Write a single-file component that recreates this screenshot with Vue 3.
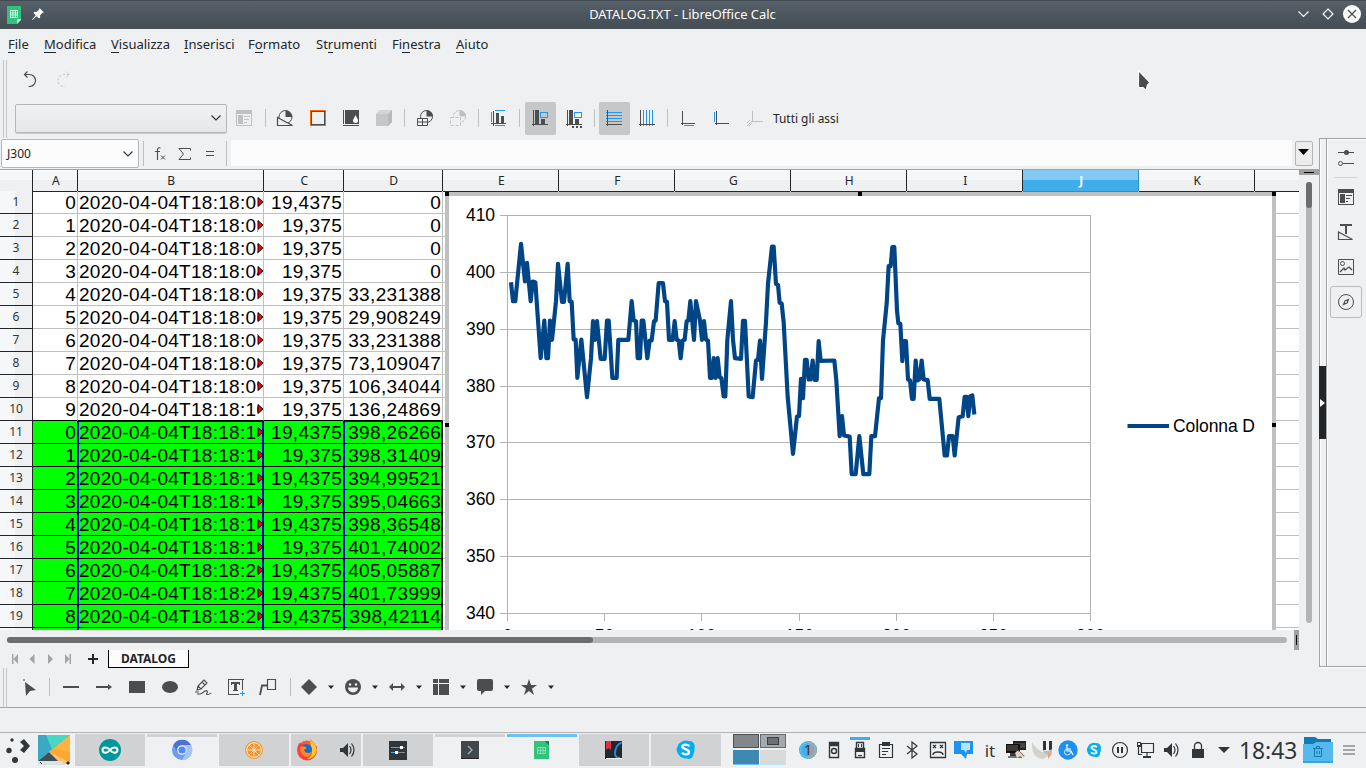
<script setup>
const menus = [
  ['', 'F', 'ile'], ['', 'M', 'odifica'], ['', 'V', 'isualizza'], ['', 'I', 'nserisci'],
  ['F', 'o', 'rmato'], ['St', 'r', 'umenti'], ['Fi', 'n', 'estra'], ['', 'A', 'iuto'],
]
const cols = ['A', 'B', 'C', 'D', 'E', 'F', 'G', 'H', 'I', 'J', 'K', '']
const secs = ['01', '02', '03', '04', '05', '06', '07', '08', '09', '10', '14', '15', '16', '17', '18', '19', '20', '21', '22', '23']
const temps = ['19,4375', '19,375', '19,375', '19,375', '19,375', '19,375', '19,375', '19,375', '19,375', '19,375',
  '19,4375', '19,375', '19,4375', '19,375', '19,4375', '19,375', '19,4375', '19,4375', '19,4375', '19,4375']
const vals = ['0', '0', '0', '0', '33,231388', '29,908249', '33,231388', '73,109047', '106,34044', '136,24869',
  '398,26266', '398,31409', '394,99521', '395,04663', '398,36548', '401,74002', '405,05887', '401,73999', '398,42114', '398,47']
const rows = vals.map((v, i) => ({
  n: i + 1, a: i < 10 ? i : i - 10, b: '2020-04-04T18:18:' + secs[i], c: temps[i], d: v, green: i > 9, first: i === 10, before: i === 9,
}))
const yTicks = [410, 400, 390, 380, 370, 360, 350, 340].map((v, i) => ({ v, y: 215.5 + Math.round(i * 56.86) }))
const xTicks = [0, 50, 100, 150, 200, 250, 300].map((v, i) => ({ v, x: Math.round(507 + i * 97.2) + 0.5 }))
const series = '213,305 219,362 226,362 234,280 243,190 255,303 261,247 272,362 278,303 286,305 302,533 313,420 319,533 324,533 330,420 336,478 348,362 354,250 366,364 372,364 383,250 389,362 395,364 401,477 407,477 412,592 424,477 441,650 453,533 459,422 465,478 471,422 482,535 494,535 501,420 506,420 517,592 530,592 535,478 565,478 575,362 581,420 588,422 593,533 600,533 605,420 610,420 622,533 629,480 635,480 642,422 647,420 656,308 669,308 675,362 681,364 687,478 698,478 704,422 710,478 716,480 722,533 728,480 734,478 740,422 745,420 751,362 762,478 768,362 780,420 786,478 792,422 798,478 804,480 810,592 816,592 821,533 827,592 833,533 839,590 844,592 851,648 856,648 862,478 873,362 879,478 885,533 903,535 909,421 915,421 926,648 938,650 948,540 954,538 960,480 966,595 978,425 984,310 996,198 1001,198 1008,310 1014,313 1019,367 1025,369 1031,425 1043,648 1059,820 1071,708 1077,707 1083,595 1089,653 1095,538 1100,538 1106,597 1112,597 1118,540 1124,598 1130,598 1136,482 1142,541 1183,540 1189,600 1199,767 1206,707 1212,765 1229,768 1235,881 1247,881 1258,767 1270,881 1288,881 1294,767 1305,767 1317,653 1323,653 1329,480 1340,370 1346,257 1352,257 1357,200 1363,200 1371,390 1375,428 1381,430 1387,542 1392,482 1398,482 1404,597 1410,599 1416,655 1421,655 1427,540 1433,600 1439,595 1445,540 1451,597 1463,599 1469,655 1498,655 1514,825 1521,825 1527,767 1538,767 1544,825 1556,710 1568,707 1574,649 1580,649 1585,707 1591,647 1597,645 1603,702'

const D = '#4d4d4d'
const B = '#1d99f3'
const G = '#bfc0c1'
const cr = 'shape-rendering="crispEdges"'
const chartBar = [
  { k: 'icon', g: `<g ${cr} fill="${G}"><path d="M0 0h16v16H0z"/><path d="M1 4h14v11H1z" fill="#eff0f1"/><path d="M2 5h5v9H2zM8 6h6v1H8zM8 9h5v1H8zM8 12h3v1H8z"/></g>` },
  { k: 'sep' },
  { k: 'icon', g: `<circle cx="8.500" cy="7" r="6.500" fill="none" stroke="${D}"/><path d="M8.500 .5A6.500 6.500 0 0 1 15 7H8.500z" fill="${D}"/><path d="M.5 7.500v8h15z" fill="#eff0f1" stroke="${D}" stroke-width="1.200"/>` },
  { k: 'icon', g: `<g ${cr}><path d="M0 0h16v16H0z" fill="#ff6600"/><path d="M1 1h14v14H1z" fill="${D}"/><path d="M2 2h12v12H2z" fill="#eff0f1"/></g>` },
  { k: 'icon', g: `<path ${cr} d="M0 0h1v14H0zM2 0h14v14H2zM0 15h16v1H0z" fill="${D}"/><path d="M12.500 5c1.500 3 2.500 4 2.500 5.500a2.500 2.500 0 0 1-5 0C10 9 11.500 8 12.500 5z" fill="#fff"/>` },
  { k: 'icon', g: `<path d="M0 4l4-4h12v12l-4 4H0z" fill="#c5c6c7"/><path d="M12 4l4-4v12l-4 4z" fill="#b8b9ba"/><path d="M0 4l4-4h12l-4 4z" fill="#d3d4d5"/>` },
  { k: 'sep' },
  { k: 'icon', g: `<circle cx="9.500" cy="6.500" r="6" fill="none" stroke="${D}"/><path d="M9.500 0A6.500 6.500 0 0 1 16 6.500H9.500z" fill="${D}"/><path d="M.5 8.500h10v7H.5zM5.500 8.500v7M.5 12h10" fill="#eff0f1" stroke="${D}"/>` },
  { k: 'icon', g: `<circle cx="9.500" cy="6.500" r="6" fill="none" stroke="${G}" stroke-dasharray="3 1"/><path d="M9.500 0A6.500 6.500 0 0 1 16 6.500H9.500z" fill="${G}"/><path d="M.5 7.500h10v8H.5z" fill="#eff0f1" stroke="${G}" stroke-dasharray="3 2"/>` },
  { k: 'sep' },
  { k: 'icon', g: `<path ${cr} d="M2 1h1v15H2zM0 13h15v1H0zM5 3h3v10H5zM10 6h3v7h-3z" fill="${D}"/><path ${cr} d="M0 2h1v10H0zM4 0h10v1H4zM4 15h10v1H4z" fill="${B}"/>` },
  { k: 'sep' },
  { k: 'icon', on: 1, g: `<path ${cr} d="M1 0h1v16H1zM0 14h16v1H0zM3 0h4v14H3zM9 9h4v5H9z" fill="${D}"/><path ${cr} d="M8 2h8v6H8zM9 3v4h6V3z" fill="${B}" fill-rule="evenodd"/>` },
  { k: 'icon', g: `<path ${cr} d="M1 0h1v16H1zM0 14h16v1H0zM3 0h4v14H3zM9 9h4v5H9zM6 16h2v2H6zM10 16h2v2h-2zM14 16h2v2h-2z" fill="${D}"/><path ${cr} d="M8 2h8v6H8zM9 3v4h6V3z" fill="${B}" fill-rule="evenodd"/><path d="M9 3h6v4H9z" fill="#fcfcfc"/>` },
  { k: 'sep' },
  { k: 'icon', on: 1, g: `<path ${cr} d="M0 2h16v1H0zM0 5h16v1H0zM0 8h16v1H0zM0 11h16v1H0z" fill="${B}"/><path ${cr} d="M1 0h1v16H1zM0 14h16v1H0z" fill="${D}"/>` },
  { k: 'icon', g: `<path ${cr} d="M4 0h1v16H4zM7 0h1v16H7zM10 0h1v16h-1zM13 0h1v16h-1z" fill="${B}"/><path ${cr} d="M1 0h1v16H1zM0 14h16v1H0z" fill="${D}"/>` },
  { k: 'sep' },
  { k: 'icon', g: `<path ${cr} d="M2 1h1v14H2zM1 13h14v1H1z" fill="${D}"/><path ${cr} d="M4 15h10v1H4z" fill="${B}"/>` },
  { k: 'icon', g: `<path ${cr} d="M3 1h1v14H3zM2 13h14v1H2z" fill="${D}"/><path ${cr} d="M1 2h1v10H1z" fill="${B}"/>` },
  { k: 'icon', g: `<path ${cr} d="M5 1h1v11H5zM5 11h11v1H5z" fill="${G}"/><path d="M5 11l-5 5M3 10l-3 3M5 13l-3 3" stroke="${G}"/>` },
]
const caret = `<path d="M5 6.500h6L8 10z" fill="#232629"/>`
const drawBar = [
  { g: `<path d="M4 3l11 8-6 1-4 5z" fill="${D}"/><path d="M2 0h2v2H2z" fill="#999"/>` },
  { k: 'sep' },
  { g: `<path ${cr} d="M0 7h16v2H0z" fill="${D}"/>` },
  { g: `<path ${cr} d="M0 7h13v2H0z" fill="${D}"/><path d="M12 5l4 3-4 3z" fill="${D}"/>` },
  { g: `<path d="M0 2h16v12H0z" fill="${D}"/>` },
  { g: `<ellipse cx="8" cy="8" rx="8" ry="6" fill="${D}"/>` },
  { g: `<path d="M3 7l6-6 3 3-6 6-4 1zM7 3l3 3M3 7l3 3M4 13H0M2 15h3c3 0 5-5 7-3s-2 3 0 3.500 4-2 4-1" fill="none" stroke="${D}" stroke-width="1.100"/>` },
  { g: `<path d="M.5 0v13M14.500 0v11M0 .5h16M0 15.500h11M.5 12v4" stroke="${D}" fill="none"/><path ${cr} d="M3 3h9v3h-1V5H9v6h1v1H5v-1h1V5H4v1H3z" fill="${D}"/><path ${cr} d="M12 14h5v1h-5zM14 12h1v5h-1z" fill="${B}"/>` },
  { g: `<path d="M7.500 .5h8v10h-8z" fill="none" stroke="${D}" stroke-width="1.200"/><path d="M0 16l2-9.500h5" fill="none" stroke="${D}" stroke-width="1.800"/>` },
  { k: 'sep' },
  { g: `<path d="M8 0l8 8-8 8-8-8z" fill="${D}"/>` }, { g: caret },
  { g: `<circle cx="8" cy="8" r="8" fill="${D}"/><circle cx="5" cy="5.500" r="1.200" fill="#eff0f1"/><circle cx="11" cy="5.500" r="1.200" fill="#eff0f1"/><path d="M3 8.500h10a5 5 0 0 1-10 0z" fill="#eff0f1"/>` }, { g: caret },
  { g: `<path d="M0 8l4-4v3h8V4l4 4-4 4V9H4v3z" fill="${D}"/>` }, { g: caret },
  { g: `<path ${cr} d="M0 0h5v4H0zM6 0h10v4H6zM0 5h5v11H0zM6 5h4v5H6zM11 5h5v5h-5zM6 11h10v5H6z" fill="${D}"/><path ${cr} d="M6 5h10v11H6z" fill="${D}"/>` }, { g: caret },
  { g: `<path d="M2 0h12q2 0 2 2v8q0 2-2 2h-6l-4 4v-4H2q-2 0-2-2V2q0-2 2-2z" fill="${D}"/>` }, { g: caret },
  { g: `<path d="M8 0l2 6h6l-5 3.800L13 16l-5-4-5 4 2-6.200L0 6h6z" fill="${D}"/>` }, { g: caret },
]
const side = [
  `<path ${cr} d="M0 2h16v1H0zM5 13h11v1H5z" fill="${D}"/><circle cx="8.500" cy="2.500" r="2.500" fill="${D}"/><circle cx="2.500" cy="13.500" r="2" fill="none" stroke="${D}"/>`,
  `<path ${cr} d="M0 0h16v16H0zM1 4v11h14V4z" fill="${D}" fill-rule="evenodd"/><path ${cr} d="M2 5h5v9H2zM8 6h6v1H8zM8 9h4v1H8zM8 12h2v1H8z" fill="${D}"/>`,
  `<path ${cr} d="M2 0h12v2H2zM7 2h2v8H7z" fill="${D}"/><path d="M.5 8v7.500h14z" fill="none" stroke="${D}" stroke-width="1.200"/>`,
  `<path d="M.5 .5h15v15H.5z" fill="none" stroke="${D}"/><circle cx="4.500" cy="4.500" r="2" fill="none" stroke="${D}"/><path d="M2 13l4-4 1 2 4-3 1 1 2 2" fill="none" stroke="${D}" stroke-width="1.300"/>`,
  `<circle cx="8" cy="8" r="7.500" fill="none" stroke="${D}"/><path d="M11.500 4.500l-2 5-5 2 2-5z" fill="${D}"/><circle cx="8" cy="8" r="1" fill="#eff0f1"/>`,
]
const spk = `<path d="M1 7h3l5-5v14l-5-5H1z" fill="#31363b"/><path d="M10.500 5q3 4 0 8M12.500 2.500q5 6.500 0 13" fill="none" stroke="#31363b" stroke-width="1.200"/>`
const skype = `<path d="M2 7A9 9 0 0 1 13 1.500a5.500 5.500 0 0 1 6 7A9 9 0 0 1 18 14a5 5 0 0 1-7 5A9 9 0 0 1 1.500 12 5 5 0 0 1 2 7z" fill="#00aff0"/><path d="M14 6.500q-4-2.500-6.500-.5c-3 3.500 6 3.500 6 6.500 0 3-5 3-7 .8" fill="none" stroke="#fff" stroke-width="2.400"/>`
const tasks = [
  { bg: 1, g: `<circle cx="11" cy="11" r="11" fill="#00979c"/><path d="M11 11C8.500 7.500 3.500 7.500 3.500 11s5 3.500 7.500 0 7.500-3.500 7.500 0-5 3.500-7.500 0z" fill="none" stroke="#fff" stroke-width="2"/>` },
  { top: 'gray', g: `<circle cx="11" cy="11" r="10" fill="#6f9bf0"/><path d="M2.300 6A10 10 0 0 1 20 6H11a5 5 0 0 0-4.500 7z" fill="#4a72d8"/><path d="M20 6a10 10 0 0 1-9 15l4.500-8A5 5 0 0 0 11 6z" fill="#a5c3f8"/><circle cx="11" cy="11" r="4.800" fill="#eaf1ff"/><circle cx="11" cy="11" r="3.600" fill="#4c8bf5"/>` },
  { bg: 1, g: `<circle cx="11" cy="11" r="9" fill="#f59a2a"/><circle cx="11" cy="11" r="7.800" fill="#ffe3b5"/><circle cx="11" cy="11" r="6.800" fill="#f98f2e"/><path d="M11 4v14M4 11h14M6 6l10 10M16 6L6 16" stroke="#ffe3b5"/>` },
  { bg: 1, ff: 1, g: `<circle cx="11" cy="11.500" r="10" fill="#ff5a28"/><path d="M3 4Q0 10 3 16q5 7 12 4 7-4 6-12Q18 4 14 0q2 5-2 7z" fill="#ff3b4b"/><path d="M14 1q9 6 6 13-3 6-9 6 6-3 5-9-2-4-2-10z" fill="#ffca28"/><circle cx="10.500" cy="10.500" r="5.500" fill="#176ad2"/><path d="M4 8q4-2 7 1l-3 2q1 3 5 3 3-1 3-2-1 6-6 6-6-2-6-10z" fill="#ff8a16"/>` },
  { bg: 1, g: `<path d="M2 2h18v19H2z" fill="#31363b"/><path d="M4 8.500h10M4 13.500h5" stroke="#3daee9"/><path d="M14 8.500h4M9 13.500h9" stroke="#858a8e"/><path d="M13 7h3v3h-3zM8 12h3v3H8z" fill="#fff"/>` },
  { top: 'gray', g: `<path d="M2 2h18v18H2z" fill="#40484b"/><path d="M2 19h18v1H2z" fill="#222"/><path d="M9 7l4 4-4 4" fill="none" stroke="#aab2b5" stroke-width="1.300"/>` },
  { top: 'blue', g: `<path d="M3 2h10l5 5v13H3z" fill="#31c27c"/><path d="M13 2h5v5z" fill="#168554"/><path d="M6.500 8.500h8v6h-8zM9.500 8.500v6M12 8.500v6M6.500 11.500h8" fill="none" stroke="#83e0b2"/>` },
  { bg: 1, g: `<path d="M2 2h17v18H2z" fill="#24282b"/><path d="M3 2h5v9l-2.500-2L3 11z" fill="#da3347"/><path d="M19 3.500q-7 2-7 12 1 4 5 3" fill="none" stroke="#1d91f0" stroke-width="1.800"/><path d="M3 19h16v1H3z" fill="#eee"/>` },
  { bg: 1, g: `<g transform="translate(.5 .5)">${skype}</g>` },
]
const T = '#31363b'
const tray = [
  `<circle cx="10" cy="10" r="9" fill="#40b1ec"/><path d="M10 1a9 9 0 0 1 0 18z" fill="#9ba2a6"/><circle cx="10" cy="10" r="7.500" fill="none" stroke="#75c3e9"/><text x="10" y="15" text-anchor="middle" font-size="14" fill="#31363b">1</text>`,
  `<path d="M5.500 2.500h9v15h-9zM5 5.500h10" fill="none" stroke="${T}" stroke-width="1.400"/><circle cx="10" cy="11" r="2.500" fill="none" stroke="${T}" stroke-width="1.500"/><path d="M6 3h8v2H6z" fill="${T}"/>`,
  `<path d="M6.500 2.500h7v6h-7zM5.500 8.500h9v9h-9z" fill="none" stroke="${T}" stroke-width="1.400"/><path d="M8 4h1v3H8zM11 4h1v3h-1zM6 9h8v3H6zM8 15h4v1H8z" fill="${T}"/>`,
  `<path d="M3.500 4.500h13v13h-13z" fill="none" stroke="${T}" stroke-width="1.200"/><path d="M6 2h8v4H6zM6 8h8v1H6zM6 11h6v1H6zM6 14h4v1H6z" fill="${T}"/>`,
  `<path d="M5 6l10 8-5 4V2l5 4-10 8" fill="none" stroke="${T}" stroke-width="1.200"/>`,
  `<path d="M2.500 2.500h15v15h-15z" fill="none" stroke="${T}" stroke-width="1.300"/><path d="M5 5l3 3M8 5L5 8M12 5l3 3M15 5l-3 3M5 15q0-3 5-3t5 3" fill="none" stroke="${T}" stroke-width="1.400"/>`,
  `<path d="M0 1h19v13h-6l-1 5-5-5H0z" fill="#1d94f3"/><path d="M7 3h9v7h-3l-1 3-2-3H7z" fill="#b9e3ff"/>`,
  '',
  `<path d="M7 1h13v9H7z" fill="#222"/><path d="M8 3h11v5H8z" fill="#444"/><path d="M0 4h14v9H0z" fill="#111"/><path d="M1 5h11v6H1zM4 13h9v3H4z" fill="#3a3a3a"/><path d="M2 16h14v2H2z" fill="#777"/><path d="M9 13l2-2 5 1 4 4-3 2-3-2-3 2z" fill="#ddd6c8"/><path d="M12 10l6 6" stroke="#8c745c"/>`,
  `<path d="M0 2q4 7 10 10l5-1 3 4-7 4Q-1 18 0 2z" fill="#d4d0cb"/><path d="M11 1h3v9h-3z" fill="#333"/><path d="M17 1h3v9h-3z" fill="#333"/><path d="M10 9q5 4 10 0v4q-6 4-10-4z" fill="#bdb9b5"/><path d="M16 13l4 1-4 5z" fill="#f3a16b"/>`,
  `<circle cx="10" cy="10" r="9.700" fill="#1d90f5"/><circle cx="9" cy="5.500" r="1.200" fill="#fff"/><path d="M9 7v4h4l2 4M9 9h4" fill="none" stroke="#fff" stroke-width="1.200"/><circle cx="9.500" cy="12" r="3" fill="none" stroke="#d5ebff"/>`,
  `<g transform="translate(2 2) scale(.78)">${skype}</g>`,
  `<circle cx="10" cy="10" r="7.500" fill="none" stroke="${T}" stroke-width="1.200"/><path d="M7 7h2v6H7zM11 7h2v6h-2z" fill="${T}"/>`,
  `<path d="M5.500 3.500h12v9h-12zM2.500 5.500v9H6M11 13v4M7 17h8" fill="none" stroke="${T}" stroke-width="1.200"/><path d="M1 2h4v5H1zM7 16h8v2H7z" fill="${T}"/><path d="M2 3h2v2H2z" fill="#eee"/>`,
  `<g transform="translate(1 1)">${spk}</g>`,
  `<path d="M4 9h12v9H4z" fill="${T}"/><path d="M6.500 9V6a3.500 3.500 0 0 1 7 0v3" fill="none" stroke="${T}" stroke-width="1.300"/>`,
  `<path d="M4 7h12l-6 6z" fill="${T}"/>`,
]
</script>

<template>
  <div class="screen">
    <header class="title">
      <svg class="app-ico" width="14" height="18" viewBox="0 0 14 18"><path d="M0 0h14v13l-4 5H0z" fill="#2ec27e" /><path d="M14 13v1l-4 4v-5z" fill="#b5efd1" /><path d="M3.500 4.500h7v7h-7zM3.500 7h7M3.500 9h7M6 5v7M8.500 5v7" fill="none" stroke="#c8f5dd" /></svg>
      <svg class="pin" width="12" height="12" viewBox="0 0 12 12"><path d="M7.500 0L12 4.500l-1.500 .3-2.500 2.700 .2 2L7 10.500 4.800 8.200 .5 12 0 11.500 3.800 7.200 1.500 5l1-1.200 2 .2L7.200 1.500z" fill="#fcfcfc" /></svg>
      <span class="name">DATALOG.TXT - LibreOffice Calc</span>
      <svg class="wm" width="64" height="20" viewBox="0 0 64 20"><path d="M1.500 7.500l5 5 5-5" fill="none" stroke="#fcfcfc" stroke-width="1.200" /><path d="M31 5l5 5-5 5-5-5z" fill="none" stroke="#fcfcfc" stroke-width="1.200" /><circle cx="55" cy="10" r="9" fill="#fcfcfc" /><path d="M51 6l8 8M59 6l-8 8" stroke="#475057" stroke-width="1.300" /></svg>
    </header>
    <nav class="menu"><span v-for="m in menus" :key="m.join('')">{{ m[0] }}<u>{{ m[1] }}</u>{{ m[2] }}</span></nav>

    <section class="bars">
      <i class="grip" />
      <div class="bar-rows">
        <div class="undo-row">
          <svg width="16" height="16" viewBox="0 0 16 16"><path d="M4.500 .5l-3 3 3 3M1.500 3.500h5a5.500 5.500 0 0 1 0 12h-1" fill="none" stroke="#4d4d4d" stroke-width="1.200" /></svg>
          <svg width="16" height="16" viewBox="0 0 16 16"><path d="M10 .5l3 3-3 3" fill="none" stroke="#cfd0d1" /><path d="M13 3.500H8a5.500 5.500 0 0 0 0 12h1" fill="none" stroke="#bfc0c1" stroke-dasharray="2 2" /></svg>
        </div>
        <div class="chart-row">
          <div class="combo"><svg width="10" height="6" viewBox="0 0 10 6"><path d="M.5 .5L5 5 9.500 .5" fill="none" stroke="#31363b" stroke-width="1.200" /></svg></div>
          <div v-for="(t, i) in chartBar" :key="i" :class="[t.k, { on: t.on }]"><svg v-if="t.g" width="16" height="16" viewBox="0 0 16 16" v-html="t.g" /></div>
          <span class="axes">Tutti gli assi</span>
        </div>
      </div>
    </section>

    <main class="body">
      <div class="left">
        <div class="formula">
          <div class="cellname"><span>J300</span><svg width="10" height="6" viewBox="0 0 10 6"><path d="M.5 .5L5 5 9.500 .5" fill="none" stroke="#31363b" stroke-width="1.200" /></svg></div>
          <div class="sep" />
          <div><svg width="12" height="14" viewBox="0 0 12 14"><path d="M6.500 1Q3.500 0 3.500 3v10M1 4.500h5" fill="none" stroke="#4d4d4d" stroke-width="1.100" /><path d="M7 8.500l4 4M11 8.500l-4 4" stroke="#4d4d4d" /></svg></div>
          <div><svg width="14" height="12" viewBox="0 0 14 12"><path d="M12.500 2.500v-2H1l4.500 5.500L1 11.500h11.500v-2" fill="none" stroke="#4d4d4d" /></svg></div>
          <div><svg width="8" height="5" viewBox="0 0 8 5"><path d="M0 .5h8M0 4.500h8" stroke="#4d4d4d" /></svg></div>
          <div class="sep" />
          <div class="input" />
          <div class="expand"><svg width="11" height="6" viewBox="0 0 11 6"><path d="M0 0h11L5.500 6z" fill="#000" /></svg></div>
        </div>
        <div class="sheet">
          <div class="cells">
            <div class="row head"><div class="corner" /><div v-for="c in cols" :key="c" :class="{ sel: c === 'J' }">{{ c }}</div></div>
            <div v-for="r in rows" :key="r.n" class="row data" :class="{ green: r.green, first: r.first, before: r.before }">
              <div class="rn">{{ r.n }}</div>
              <div class="cell">{{ r.a }}</div>
              <div class="cell date"><span>{{ r.b }}</span><svg width="5" height="10" viewBox="0 0 5 10"><path d="M0 .5v9L5 5z" fill="#f00" stroke="#000" stroke-width=".9" /></svg></div>
              <div class="cell">{{ r.c }}</div>
              <div class="cell dval">{{ r.d }}</div>
              <div v-for="k in 8" :key="k" class="cell" />
            </div>
            <svg class="chart" width="831" height="438" viewBox="445 192 831 438">
              <rect x="447" y="194" width="827" height="450" fill="#fff" stroke="#c0c0c0" stroke-width="4" />
              <g stroke="#b3b3b3">
                <path v-for="t in yTicks" :key="t.v" :d="`M500 ${t.y}H1091`" />
                <path d="M507.500 215V619M1090.500 215V619" />
                <path v-for="t in xTicks" :key="t.v" :d="`M${t.x} 613V621`" />
              </g>
              <text v-for="t in yTicks" :key="t.v" x="495" :y="t.y + 5.500" text-anchor="end" textLength="29">{{ t.v }}</text>
              <text v-for="t in xTicks" :key="'x' + t.v" :x="t.x" y="641.500" text-anchor="middle">{{ t.v }}</text>
              <g transform="translate(440 180.5) scale(.33333)"><polyline :points="series" fill="none" stroke="#004586" stroke-width="12.500" stroke-linejoin="round" /></g>
              <path d="M1127.500 426H1169" stroke="#004586" stroke-width="4" />
              <text x="1173" y="432" textLength="82">Colonna D</text>
              <path d="M445 192h4v4h-4zM858 192h4v4h-4zM1272 192h4v4h-4zM445 423h4v4h-4zM1272 423h4v4h-4z" fill="#000" />
            </svg>
          </div>
          <div class="vscroll"><i class="split" /><div class="track"><b /></div></div>
        </div>
        <div class="hscroll"><div class="track"><b /></div><i class="split" /></div>
        <div class="tabs">
          <svg width="64" height="12" viewBox="0 0 64 12"><g fill="#a3a4a5"><path d="M2 1h1.500v10H2zM8 1v10L3.500 6zM24.500 1v10l-5-5zM38 1v10l5-5zM55 1v10l4.500-5zM59.500 1H61v10h-1.500z" /></g></svg>
          <svg class="plus" width="10" height="10" viewBox="0 0 10 10"><path d="M0 5h10M5 0v10" stroke="#232629" stroke-width="2" /></svg>
          <div class="tab">DATALOG</div>
        </div>
      </div>
      <aside class="side">
        <div class="splitter"><div class="handle"><svg width="6" height="8" viewBox="0 0 6 8"><path d="M0 0l5 4-5 4z" fill="#fff" /></svg></div></div>
        <div class="deck"><div v-for="(s, i) in side" :key="i" class="sb"><svg width="16" height="16" viewBox="0 0 16 16" v-html="s" /></div></div>
      </aside>
    </main>

    <section class="draw">
      <i class="grip" />
      <div v-for="(t, i) in drawBar" :key="i" :class="t.k || 'icon'"><svg v-if="t.g" width="16" height="16" viewBox="0 0 16 16" v-html="t.g" /></div>
    </section>
    <div class="status" />

    <footer class="panel">
      <svg class="kick" width="24" height="26" viewBox="0 0 24 26"><g fill="#31363b"><circle cx="6" cy="3" r="1.700" /><circle cx="3" cy="13.500" r="2.700" /><circle cx="9" cy="23" r="3" /><path d="M14 5l4-3 6 7-6 7-4-3 4-4z" /></g></svg>
      <svg class="pic" width="32" height="30" viewBox="0 0 32 30"><path d="M0 0h32L11 17 0 26z" fill="#3ba8c5" /><path d="M8 0h24L14 14z" fill="#45d9c4" /><path d="M32 0v28L11 17z" fill="#ffa62e" /><path d="M32 0v17L16 14z" fill="#ffb340" /><path d="M0 26l11-9 13 9z" fill="#3e5055" /><path d="M11 17l21 11-8 2-4-4z" fill="#f9c476" /><path d="M0 26h24l2 4H0z" fill="#dfe1e4" /><path d="M2 27l2 2M29 27h2v2h-2z" stroke="#333" /></svg>
      <div class="tasks">
        <div v-for="(t, i) in tasks" :key="i" class="task" :class="[{ bg: t.bg }, t.top]">
          <svg width="22" height="22" viewBox="0 0 22 22" v-html="t.g" />
          <svg v-if="t.ff" class="spk" width="18" height="18" viewBox="0 0 18 18" v-html="spk" />
        </div>
      </div>
      <div class="pager"><i class="p1" /><i class="p2"><b /></i><i class="p3" /><i class="p4" /></div>
      <div class="tray">
        <div v-for="(t, i) in tray" :key="i" :class="{ act: i === 2 }"><span v-if="!t">it</span><svg v-else width="20" height="20" viewBox="0 0 20 20" v-html="t" /></div>
      </div>
      <div class="clock">18:43</div>
      <svg class="trash" width="30" height="27" viewBox="0 0 30 27"><path d="M1 1h11l3 2h13v8H1z" fill="#147ab5" /><path d="M0 8h10l3-2h17v21H0z" fill="#54b9ee" /><path d="M0 25h30v2H0z" fill="#3aa2df" /><path d="M11.500 12.500h7v8h-7zM10 12.500h10M13.500 12v-1.500h3V12M14 15v3M16.500 15v3" fill="none" stroke="#1d78ad" /></svg>
      <svg width="12" height="10" viewBox="0 0 12 10"><path d="M0 1h12M0 5h12M0 9h12" stroke="#8b8e91" stroke-width="1.500" /></svg>
    </footer>
    <svg class="pointer" width="16" height="24" viewBox="0 0 16 24"><path d="M1.500 1.500v17h4.500l3 3 1.500-5.500 2.500-2.500z" fill="#4b4b4b" stroke="#fff" stroke-width="1.200" /></svg>
  </div>
</template>

<style>
body { margin: 0; overflow: hidden; }
</style>
<style scoped>
* { box-sizing: border-box; }
svg { display: block; flex: none; overflow: visible; }
.screen { position: relative; width: 1366px; height: 768px; display: flex; flex-direction: column; background: #eff0f1; font: 13px "Noto Sans", sans-serif; color: #232629; overflow: hidden; }
.title { height: 29px; flex: none; display: flex; align-items: center; background: linear-gradient(#434b52 0 1px, #566069 1px, #475057 24px); color: #fcfcfc; }
.app-ico { margin-left: 7px; }
.pin { margin: -1px 0 0 11px; }
.name { flex: 1; text-align: center; padding-left: 24px; line-height: 29px; height: 29px; font-size: 12.9px; }
.wm { margin: -1px 5px 0 0; }
.menu { height: 31px; flex: none; display: grid; grid-template-columns: 36px 67px 73px 64px 68px 76px 64px 60px; padding-left: 8px; line-height: 30px; font-size: 13px; }
.menu span { white-space: nowrap; }
.menu u { text-decoration: none; display: inline-block; line-height: 15px; border-bottom: 1px solid #232629; }
.bars { height: 78px; flex: none; display: flex; }
.grip { width: 4px; margin-left: 3px; border: solid #c4c5c6; border-width: 0 1px; flex: none; }
.bar-rows { padding-left: 8px; }
.undo-row { height: 38px; display: flex; align-items: center; gap: 17px; padding-left: 8px; }
.chart-row { height: 40px; display: grid; align-items: center; grid-template-columns: 212px 34px 8px 32px 33px 33px 33px 9px 32px 33px 9px 32px 9px 33px 33px 8px 33px 32px 9px 32px 33px 35px auto; }
.combo { height: 29px; border: 1px solid #b5b7b9; border-radius: 2px; background: linear-gradient(#f1f2f3, #e6e7e8); display: flex; align-items: center; justify-content: flex-end; padding-right: 5px; box-shadow: 0 1px #c8c9ca; }
.icon { display: flex; align-items: center; justify-content: center; }
.on { height: 33px; width: 31px; justify-self: center; background: #c6c7c9; border-radius: 2px; padding-right: 1px; }
.sep { width: 1px; height: 18px; background: #bfc0c2; justify-self: center; }
.axes { padding-left: 1px; margin-top: -1px; line-height: 18px; font-size: 11.900px; }
.body { height: 530px; flex: none; display: flex; }
.left { width: 1319px; flex: none; }
.formula { height: 32px; display: grid; grid-template-columns: 138px 9px 24px 26px 24px 9px 1061px 24px; align-items: center; padding-left: 1px; border-bottom: 1px solid #a2a4a5; }
.formula > div { display: flex; align-items: center; justify-content: center; }
.formula .cellname { height: 29px; border: 1px solid #b5b7b9; border-radius: 2px; background: #fcfcfc; justify-content: space-between; padding: 0 5px; font-size: 12px; }
.formula .sep { height: 25px; }
.formula .input { height: 26px; background: #fcfcfc; margin-top: -2px; }
.formula .expand { width: 18px; height: 25px; margin: -1px 0 0 3px; border: 1px solid #b2b4b6; border-radius: 2px; background: #ececed; }
.formula .expand svg { margin: -2px 0 0 -1px; }
.sheet { height: 460px; display: flex; }
.cells { position: relative; width: 1299px; height: 460px; overflow: hidden; background: #fff; }
.row { display: grid; grid-template-columns: 33px 45px 186px 80px 99px repeat(7, 116px) 45px; }
.head { height: 21px; background: linear-gradient(#f5f7f8 0 10px, #eff0f1 10px); }
.head div { border-right: 1px solid #232629; border-bottom: 1px solid #232629; text-align: center; line-height: 21px; font-size: 12px; padding-left: 1.500px; }
.head .sel { background: linear-gradient(#82caf3 0 10px, #3daeeb 10px); color: #fcfcfc; font-weight: bold; border-color: #2b91c9; }
.head div:last-child { border-right: 0; }
.data { height: 23px; }
.rn { border-right: 1px solid #232629; border-bottom: 1px solid #232629; background: linear-gradient(90deg, #f5f7f8 0 15px, #eff0f1 15px); text-align: center; font-size: 12px; line-height: 22px; color: #31363b; }
.cell { border-right: 1px solid #c0c0c0; border-bottom: 1px solid #c0c0c0; text-align: right; font: 19px/22px "Liberation Sans", Arial, sans-serif; letter-spacing: .36px; color: #000; padding-right: .8px; padding-top: .5px; white-space: nowrap; overflow: hidden; }
.date { display: flex; align-items: center; padding: 1px 0 0; letter-spacing: .29px; }
.date span { width: 180px; padding-left: 1px; text-align: left; overflow: hidden; flex: none; }
.date svg { margin-top: -1px; }
.before .cell:nth-child(-n + 5) { border-bottom-color: #000; }
.green .cell:nth-child(-n + 5) { background: #0f0; border-color: #000; }
.green .cell:nth-child(3) { box-shadow: inset 1px 0 #0000e0, inset -1px 0 #0000e0; }
.green .dval { box-shadow: inset 1px 0 #0000e0, inset -1px 0 #0000e0; }
.first .cell:nth-child(3), .first .dval { box-shadow: inset 1px 0 #0000e0, inset -1px 0 #0000e0, inset 0 1px #0000e0; }
.chart { position: absolute; left: 445px; top: 22px; overflow: hidden; }
.chart text { font: 17.500px "Liberation Sans", Arial, sans-serif; fill: #000; }
.vscroll { width: 20px; display: flex; flex-direction: column; align-items: center; }
.vscroll .split { width: 20px; height: 5px; background: linear-gradient(#000, #000) center / 10px 1px no-repeat #a0a0a0; }
.vscroll .track { width: 6px; height: 441px; margin-top: 7px; background: #b2b4b6; border-radius: 3px; }
.track b { display: block; background: #6b6d6f; border-radius: 3px; }
.vscroll b { height: 26px; }
.hscroll { height: 20px; display: flex; align-items: center; padding-left: 7px; }
.hscroll .track { width: 1280px; height: 6px; background: #b2b4b6; border-radius: 3px; }
.hscroll b { width: 586px; height: 6px; }
.hscroll .split { width: 5px; height: 20px; margin-left: 7px; background: linear-gradient(#000, #000) 2px center / 1px 10px no-repeat #a0a0a0; }
.tabs { height: 18px; display: flex; align-items: center; padding-left: 10px; }
.plus { margin-left: 14px; }
.tab { width: 81px; height: 18px; margin-left: 10px; background: #fcfcfc; border: solid #000; border-width: 0 1px 1px; font-weight: bold; font-size: 12px; line-height: 17px; text-align: center; }
.side { width: 47px; height: 529px; display: flex; border: solid #a2a4a5; border-width: 1px 0 1px 1px; box-shadow: 0 1px #fcfcfc; }
.splitter { width: 7px; flex: none; border-right: 1px solid #a2a4a5; border-left: 1px solid #fcfcfc; display: flex; align-items: center; }
.handle { width: 7px; height: 73px; flex: none; margin-left: -2px; background: #232629; display: flex; align-items: center; padding-left: 1px; }
.deck { border-left: 1px solid #fcfcfc; border-top: 1px solid #fcfcfc; width: 39px; flex: none; padding: 0 0 0 2px; display: flex; flex-direction: column; }
.sb { width: 32px; height: 32px; margin-bottom: 3px; display: flex; align-items: center; justify-content: center; border: 1px solid transparent; border-radius: 3px; flex: none; }
.sb:first-child { width: 24px; margin-left: 4px; height: 38px; margin-bottom: 4px; padding-bottom: 3px; border-bottom-color: #d5d6d7; border-radius: 0; }
.sb:nth-child(2) { margin-top: -1px; }
.sb:last-child { border-color: #b9bbbd; }
.draw { height: 40px; flex: none; display: grid; grid-template-columns: 12px 34px 9px 32px repeat(5, 33px) 32px 14px 22px repeat(11, 22px); align-items: center; border-bottom: 1px solid #a2a4a5; }
.draw .grip { height: 100%; }
.draw > div { margin-top: -2px; }
.draw .sep { margin-right: 2px; }
.status { height: 25px; flex: none; border-bottom: 1px solid #b0b2b4; }
.panel { height: 35px; display: flex; align-items: center; background: #eff0f1; }
.kick { margin: -2px 0 0 6px; }
.pic { margin: -2px 5px 0 8px; }
.tasks { display: flex; gap: 2px; margin-top: -1px; }
.task { width: 70px; height: 32px; display: flex; align-items: center; justify-content: center; }
.task.bg { background: #d1d2d4; }
.task.gray { box-shadow: inset 0 3px #d1d2d4; }
.task.blue { box-shadow: inset 0 3px #6fc1ec; }
.spk { margin-left: 21px; }
.pager { display: grid; grid-template: 14px 15px / 26px 26px; gap: 2px 1px; margin: -2px 9px 0 12px; }
.p1 { background: #83878c; border: 1px solid #4d5155; }
.p2 { background: #a5a9ac; border: 1px solid #686c70; display: flex; align-items: center; justify-content: center; }
.p2 b { width: 12px; height: 8px; background: #6d7175; border: 1px solid #3d4145; }
.p3 { background: #3f88b2; border-bottom: 1px solid #6fc1ec; }
.p4 { background: #d9dadc; border-bottom: 1px solid #bfe2f5; }
.tray { display: grid; grid-template-columns: repeat(17, 26px); height: 35px; align-items: center; }
.tray > div { display: flex; justify-content: center; align-items: center; height: 35px; font-size: 17px; color: #31363b; }
.tray svg { margin-top: -1px; }
.tray .act { background: linear-gradient(#3daee9, #3daee9) center 4px / 20px 3px no-repeat; }
.clock { width: 66px; padding-left: 2px; font-size: 22.800px; line-height: 34px; color: #31363b; }
.trash { margin: -2px 10px 0 0; }
.panel > svg:last-child { margin-top: -1px; }
.pointer { position: absolute; left: 1137px; top: 69px; }
</style>
